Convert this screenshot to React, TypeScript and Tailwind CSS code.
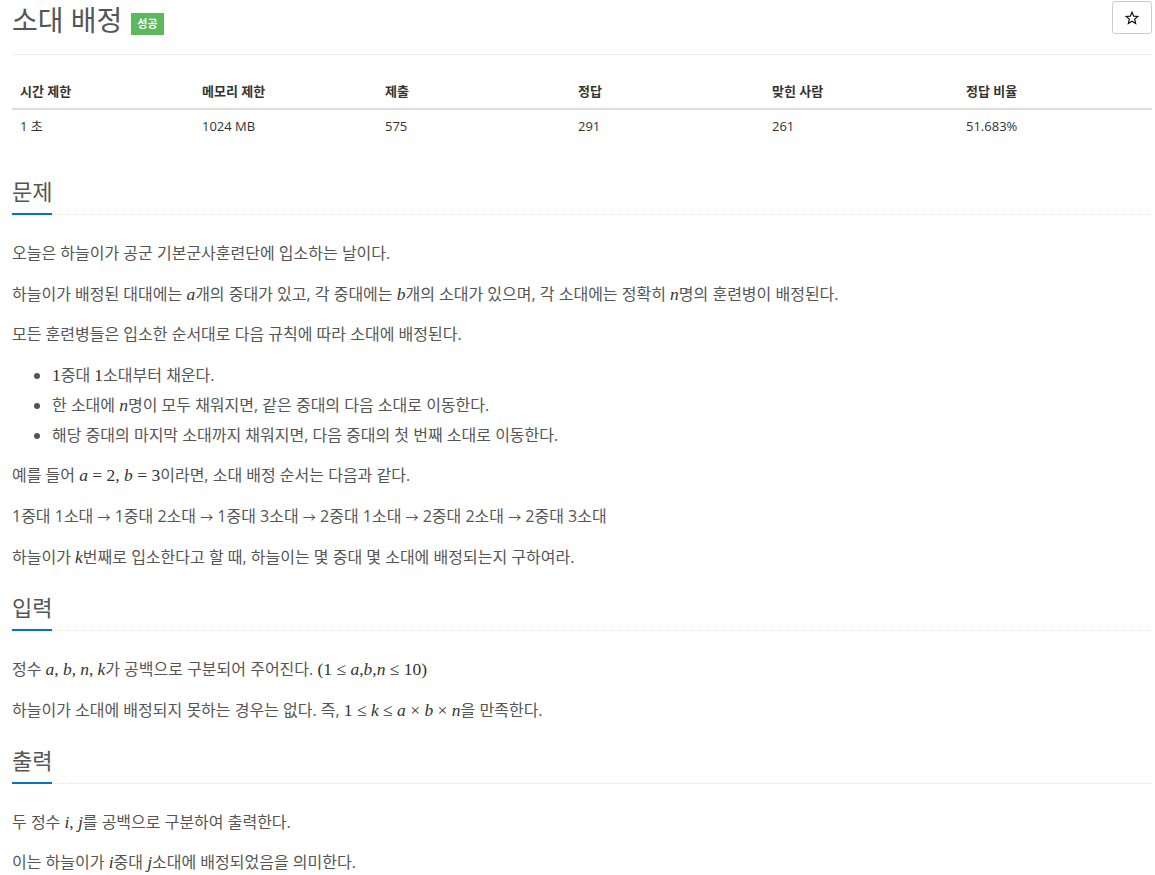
import React from "react";

const M = ({ children }: { children: React.ReactNode }) => (
  <span className="font-['Liberation_Serif','DejaVu_Serif',serif] text-[17.5px] text-[#333]">{children}</span>
);

const V = ({ children }: { children: React.ReactNode }) => <i className="italic">{children}</i>;

const Arrow = () => <span className="text-[13px]">→</span>;

function Heading({ title, first }: { title: string; first?: boolean }) {
  return (
    <div className={`${first ? "mt-[33px]" : "mt-[20px]"} border-b border-dotted border-[#dde3ea]`}>
      <span className="-mb-px inline-block border-b-2 border-[#0076c0] pb-[7px] text-[22px] leading-[30px] text-[#555]">
        {title}
      </span>
    </div>
  );
}

const P = ({ children }: { children: React.ReactNode }) => (
  <p className="mb-[10.5px] leading-[30px]">{children}</p>
);

export default function App() {
  const heads = ["시간 제한", "메모리 제한", "제출", "정답", "맞힌 사람", "정답 비율"];
  const vals = ["1 초", "1024 MB", "575", "291", "261", "51.683%"];
  const widths = ["w-[182px]", "w-[183px]", "w-[193px]", "w-[194px]", "w-[194px]", "w-[194px]"];
  const order = ["1중대 1소대", "1중대 2소대", "1중대 3소대", "2중대 1소대", "2중대 2소대", "2중대 3소대"];

  return (
    <div className="min-h-screen bg-white pl-3 font-['Open_Sans','Noto_Sans_CJK_KR',sans-serif] text-[#555]">
      <div className="w-[1140px]">
        {/* title row */}
        <div className="flex h-[55px] items-start justify-between border-b border-[#eee]">
          <div className="flex items-center gap-[9px] pt-[4px]">
            <h1 className="text-[28px] leading-[32px] text-[#555]">소대 배정</h1>
            <span className="mt-[7px] bg-[#5cb85c] px-[6px] py-[3px] text-[11px] font-bold leading-[16px] text-white">
              성공
            </span>
          </div>
          <button className="mt-[1px] flex h-[33px] w-[40px] items-center justify-center rounded-[3px] border border-[#ccc] bg-white">
            <svg width="14" height="14" viewBox="0 0 24 24" fill="none" stroke="#111" strokeWidth="2" strokeLinejoin="miter">
              <polygon points="12,2 14.9,8.9 22,9.3 16.6,14 18.3,21.5 12,17.6 5.7,21.5 7.4,14 2,9.3 9.1,8.9" />
            </svg>
          </button>
        </div>

        {/* stats table */}
        <table className="mt-[20px] w-[1140px] table-fixed text-[13px] text-[#333]">
          <thead>
            <tr className="border-b-2 border-[#ddd]">
              {heads.map((h, i) => (
                <th key={h} className={`${widths[i]} h-[34px] px-2 text-left font-bold`}>
                  {h}
                </th>
              ))}
            </tr>
          </thead>
          <tbody>
            <tr>
              {vals.map((v) => (
                <td key={v} className="h-[34px] px-2">
                  {v}
                </td>
              ))}
            </tr>
          </tbody>
        </table>

        {/* problem */}
        <Heading title="문제" first />
        <div className="mt-[23px] text-[16px]">
          <P>오늘은 하늘이가 공군 기본군사훈련단에 입소하는 날이다.</P>
          <P>
            하늘이가 배정된 대대에는 <M><V>a</V></M>개의 중대가 있고, 각 중대에는 <M><V>b</V></M>개의 소대가 있으며, 각
            소대에는 정확히 <M><V>n</V></M>명의 훈련병이 배정된다.
          </P>
          <P>모든 훈련병들은 입소한 순서대로 다음 규칙에 따라 소대에 배정된다.</P>
          <ul className="mb-[10.5px] list-disc pl-10 leading-[30px] marker:text-[#555]">
            <li>
              <M>1</M>중대 <M>1</M>소대부터 채운다.
            </li>
            <li>
              한 소대에 <M><V>n</V></M>명이 모두 채워지면, 같은 중대의 다음 소대로 이동한다.
            </li>
            <li>해당 중대의 마지막 소대까지 채워지면, 다음 중대의 첫 번째 소대로 이동한다.</li>
          </ul>
          <P>
            예를 들어{" "}
            <M>
              <V>a</V> = 2, <V>b</V> = 3
            </M>
            이라면, 소대 배정 순서는 다음과 같다.
          </P>
          <P>
            {order.map((o, i) => (
              <React.Fragment key={o}>
                {i > 0 && (
                  <>
                    {" "}
                    <Arrow />{" "}
                  </>
                )}
                {o}
              </React.Fragment>
            ))}
          </P>
          <P>
            하늘이가 <M><V>k</V></M>번째로 입소한다고 할 때, 하늘이는 몇 중대 몇 소대에 배정되는지 구하여라.
          </P>
        </div>

        {/* input */}
        <Heading title="입력" />
        <div className="mt-[23px] text-[16px]">
          <P>
            정수 <M><V>a</V>,</M> <M><V>b</V>,</M> <M><V>n</V>,</M> <M><V>k</V></M>가 공백으로 구분되어 주어진다.{" "}
            <M>
              (1 ≤ <V>a</V>,<V>b</V>,<V>n</V> ≤ 10)
            </M>
          </P>
          <P>
            하늘이가 소대에 배정되지 못하는 경우는 없다. 즉,{" "}
            <M>
              1 ≤ <V>k</V> ≤ <V>a</V> × <V>b</V> × <V>n</V>
            </M>
            을 만족한다.
          </P>
        </div>

        {/* output */}
        <Heading title="출력" />
        <div className="mt-[23px] text-[16px]">
          <P>
            두 정수 <M><V>i</V>,</M> <M><V>j</V></M>를 공백으로 구분하여 출력한다.
          </P>
          <P>
            이는 하늘이가 <M><V>i</V></M>중대 <M><V>j</V></M>소대에 배정되었음을 의미한다.
          </P>
        </div>
      </div>
    </div>
  );
}
